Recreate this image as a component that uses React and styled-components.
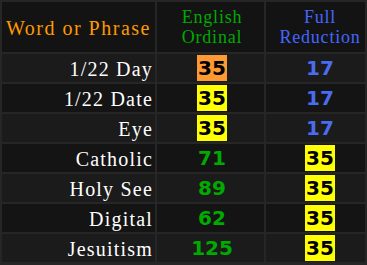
import styled, { createGlobalStyle } from 'styled-components';

const GlobalStyle = createGlobalStyle`
    body {
        margin: 0;
        background: #262626;
    }
`;

const rows = [
    { word: '1/22 Day', eo: 35, eoMark: 'orange', fr: 17 },
    { word: '1/22 Date', eo: 35, eoMark: 'yellow', fr: 17 },
    { word: 'Eye', eo: 35, eoMark: 'yellow', fr: 17 },
    { word: 'Catholic', eo: 71, fr: 35, frMark: 'yellow' },
    { word: 'Holy See', eo: 89, fr: 35, frMark: 'yellow' },
    { word: 'Digital', eo: 62, fr: 35, frMark: 'yellow' },
    { word: 'Jesuitism', eo: 125, fr: 35, frMark: 'yellow' },
];

const markColors = {
    orange: '#ff9933',
    yellow: '#ffff00',
};

const App = () => {
    return (
        <>
            <GlobalStyle />
            <Table>
                <colgroup>
                    <col style={{ width: 153 }} />
                    <col style={{ width: 107 }} />
                    <col style={{ width: 99 }} />
                </colgroup>
                <thead>
                    <tr>
                        <TitleCell>Word or Phrase</TitleCell>
                        <HeadCell color="#00aa00" $shift={3}>
                            English
                            <br />
                            Ordinal
                        </HeadCell>
                        <HeadCell color="#4466ff" $shift={9}>
                            Full
                            <br />
                            Reduction
                        </HeadCell>
                    </tr>
                </thead>
                <tbody>
                    {rows.map((row, i) => (
                        <Row key={row.word} $light={i % 2 === 0}>
                            <WordCell>{row.word}</WordCell>
                            <NumCell color="#00aa00" $shift={3}>
                                <Num $mark={row.eoMark}>{row.eo}</Num>
                            </NumCell>
                            <NumCell color="#4a6cf0" $shift={9}>
                                <Num $mark={row.frMark}>{row.fr}</Num>
                            </NumCell>
                        </Row>
                    ))}
                </tbody>
            </Table>
        </>
    );
};

const Table = styled.table`
    width: 367px;
    table-layout: fixed;
    border-collapse: separate;
    border-spacing: 2px;
    background: #262626;

    th,
    td {
        box-sizing: border-box;
    }
`;

const TitleCell = styled.th`
    height: 50px;
    padding: 2px 0 0 4px;
    background: #131313;
    color: #ff9900;
    font-family: 'Liberation Serif', serif;
    font-weight: normal;
    font-size: 20px;
    letter-spacing: 1.5px;
    text-align: left;
    white-space: nowrap;
`;

const HeadCell = styled.th`
    height: 50px;
    padding: 0 0 0 ${(props) => props.$shift}px;
    background: #131313;
    color: ${(props) => props.color};
    font-family: 'Liberation Serif', serif;
    font-weight: normal;
    font-size: 18px;
    letter-spacing: 0.8px;
    line-height: 20px;
    text-align: center;
    white-space: nowrap;
`;

const Row = styled.tr`
    background: ${(props) => (props.$light ? '#1b1b1b' : '#141414')};
`;

const WordCell = styled.td`
    height: 28px;
    padding: 2px 2px 0 0;
    color: #ffffff;
    font-family: 'Liberation Serif', serif;
    font-size: 20px;
    line-height: 24px;
    letter-spacing: 1.2px;
    text-align: right;
    white-space: nowrap;
`;

const NumCell = styled.td`
    height: 28px;
    padding: 0 0 0 ${(props) => props.$shift}px;
    text-align: center;
    color: ${(props) => props.color};
    font-family: 'DejaVu Sans', sans-serif;
    font-weight: bold;
    font-size: 20px;
    line-height: 24px;
`;

const Num = styled.span`
    display: inline-block;
    padding: 1px 1px;
    line-height: 24px;
    vertical-align: middle;
    background: ${(props) => (props.$mark ? markColors[props.$mark] : 'transparent')};
    color: ${(props) => (props.$mark ? '#000000' : 'inherit')};
`;

export default App;
